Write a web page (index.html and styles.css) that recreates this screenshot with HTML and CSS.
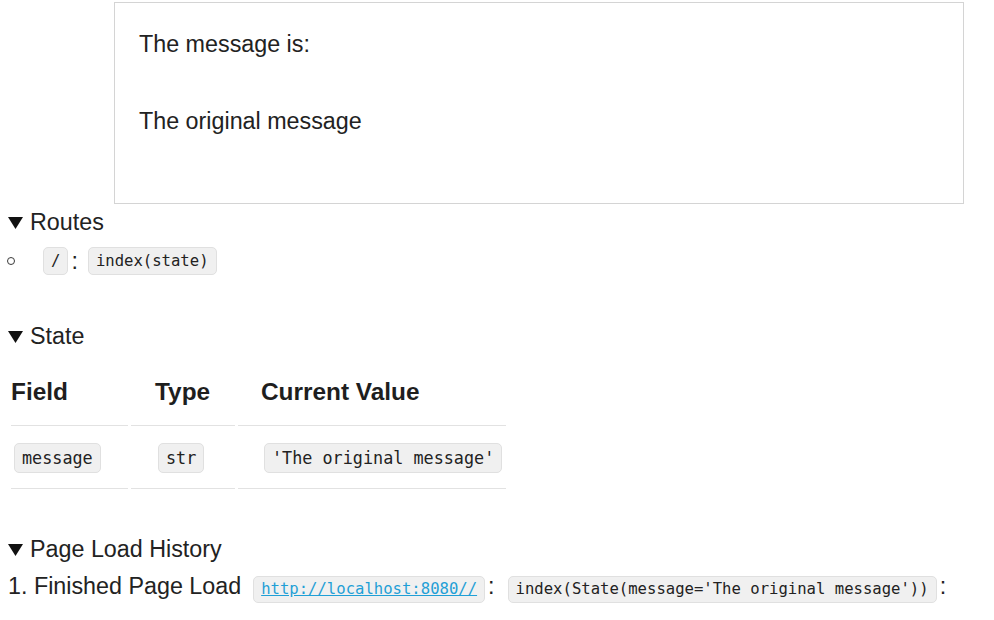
FILE: index.html
```html
<!DOCTYPE html>
<html lang="en">
<head>
<meta charset="utf-8">
<title>App state</title>
<link rel="stylesheet" href="styles.css">
</head>
<body>
<div class="page">
  <div class="message-box">
    <p class="msg">The message is:</p>
    <p class="msg msg-second">The original message</p>
  </div>

  <section class="sec sec-routes">
    <div class="sec-title"><svg class="tri" width="15" height="12" viewBox="0 0 15 12"><polygon points="0,0 15,0 7.5,12" fill="#111"/></svg><span>Routes</span></div>
    <ul class="routes">
      <li class="route"><span class="bullet"></span><code class="chip">/</code><span class="colon">:</span><code class="chip chip-next">index(state)</code></li>
    </ul>
  </section>

  <section class="sec sec-state">
    <div class="sec-title"><svg class="tri" width="15" height="12" viewBox="0 0 15 12"><polygon points="0,0 15,0 7.5,12" fill="#111"/></svg><span>State</span></div>
    <table class="state-table">
      <colgroup><col class="col-a"><col class="col-b"><col class="col-c"></colgroup>
      <thead>
        <tr><th>Field</th><th>Type</th><th>Current Value</th></tr>
      </thead>
      <tbody>
        <tr>
          <td><code class="chip chip-lg">message</code></td>
          <td><code class="chip chip-lg">str</code></td>
          <td><code class="chip chip-lg">'The original message'</code></td>
        </tr>
      </tbody>
    </table>
  </section>

  <section class="sec sec-history">
    <div class="sec-title"><svg class="tri" width="15" height="12" viewBox="0 0 15 12"><polygon points="0,0 15,0 7.5,12" fill="#111"/></svg><span>Page Load History</span></div>
    <ol class="history">
      <li class="load"><span class="load-label">1. Finished Page Load</span><code class="chip chip-sm chip-url"><a href="#">http://localhost:8080//</a></code><span class="colon">:</span><code class="chip chip-sm chip-next2">index(State(message='The original message'))</code><span class="colon">:</span></li>
    </ol>
  </section>
</div>
</body>
</html>
```

FILE: styles.css
```css
* { box-sizing: border-box; }

html, body {
  margin: 0;
  padding: 0;
  background: #ffffff;
}

body {
  font-family: "Liberation Sans", Arial, sans-serif;
  font-size: 23.3px;
  line-height: 26px;
  color: #222222;
}

.page {
  padding: 2px 8px 0;
}

.message-box {
  width: 850px;
  height: 202px;
  margin-left: 106px;
  border: 1px solid #d4d4d4;
  padding: 28px 24px 0;
}

.msg {
  margin: 0;
}

.msg-second {
  margin-top: 51px;
}

.sec-title {
  display: flex;
  align-items: center;
  height: 26px;
}

.tri {
  flex: none;
  margin-right: 7px;
  margin-top: 2px;
}

.sec-routes {
  margin-top: 5px;
}

.routes {
  list-style: none;
  margin: 12px 0 0;
  padding: 0;
}

.route {
  display: flex;
  align-items: center;
  height: 28px;
}

.bullet {
  flex: none;
  width: 8px;
  height: 8px;
  border: 1px solid #3a3a3a;
  border-radius: 50%;
  margin-left: -1px;
  margin-right: 28px;
}

.chip {
  display: inline-block;
  font-family: "DejaVu Sans Mono", "Liberation Mono", monospace;
  font-size: 15.6px;
  line-height: 26px;
  color: #222222;
  background: #f0f0f0;
  border: 1px solid #e0e0e0;
  border-radius: 5px;
  padding: 0 7px;
  white-space: pre;
}

.colon {
  margin: 0 0 0 3px;
}

.chip-next {
  margin-left: 10px;
}

.sec-state {
  margin-top: 48px;
}

.state-table {
  border-collapse: separate;
  border-spacing: 3px;
  table-layout: fixed;
  width: 501px;
  margin-top: 7px;
}

.col-a { width: 117px; }
.col-b { width: 104px; }
.col-c { width: 268px; }

.state-table th {
  font-size: 24.4px;
  line-height: 28px;
  font-weight: bold;
  text-align: left;
  padding: 19px 0;
  border-bottom: 1px solid #e2e2e2;
  color: #1e1e1e;
}

.state-table td {
  vertical-align: top;
  padding: 14px 0 15px;
  border-bottom: 1px solid #e2e2e2;
}

.state-table th:nth-child(1) { padding-left: 0; }
.state-table th:nth-child(2) { padding-left: 24px; }
.state-table th:nth-child(3) { padding-left: 23px; }
.state-table td:nth-child(1) { padding-left: 3px; }
.state-table td:nth-child(2) { padding-left: 27px; }
.state-table td:nth-child(3) { padding-left: 26px; }

.chip-lg {
  font-size: 16.8px;
  line-height: 28px;
  vertical-align: top;
}

.sec-history {
  margin-top: 44px;
}

.history {
  list-style: none;
  margin: 11px 0 0;
  padding: 0;
}

.load {
  display: flex;
  align-items: baseline;
}

.chip-sm {
  line-height: 25px;
}

.chip-url {
  margin-left: 12px;
}

.chip-url a {
  color: #1f9fd6;
  text-decoration: underline;
}

.chip-next2 {
  margin-left: 13px;
}
```
